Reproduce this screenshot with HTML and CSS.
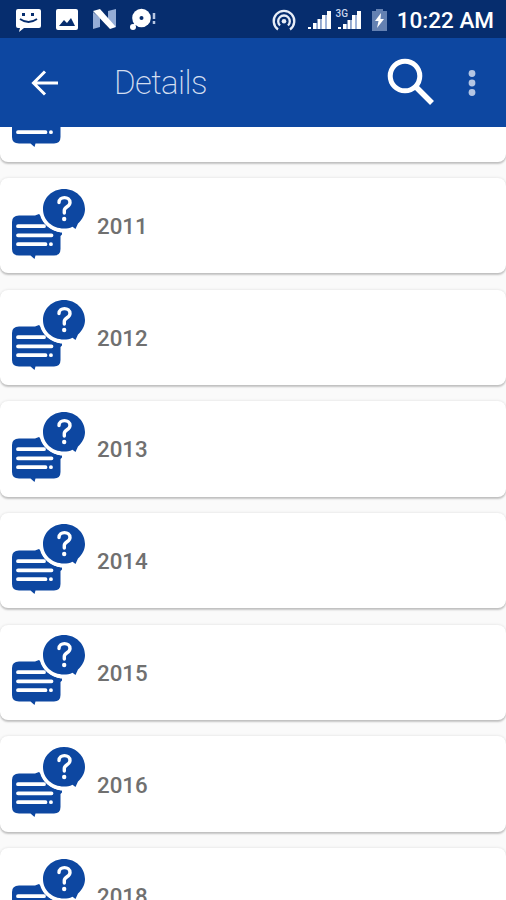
FILE: index.html
```html
<!DOCTYPE html>
<html lang="en">
<head>
  <meta charset="UTF-8" />
  <title>Details</title>
  <meta name="viewport" content="width=device-width, initial-scale=1.0" />
  <link rel="stylesheet" href="styles.css">
</head>
<body>
  <!-- Shared chat icon -->
  <svg class="sprite" aria-hidden="true">
    <symbol id="chat" viewBox="0 0 74 72">
      <path fill="#0d47a1" d="M7 27.500H23L27 26L29 28C31 36 39 43 50 44.500V46.500L48.500 48V61Q48.500 67.500 42 67.500H23.500L22.500 71L18.500 67.500H7Q0 67.500 0 61V34Q0 27.500 7 27.500Z"/>
      <path stroke="#fff" stroke-width="3.800" stroke-linecap="round" d="M6 38.200H32M6 47.300H39.500M6 56.200H33.500M38.900 56.200H39"/>
      <path fill="#fff" d="M28 26.500C30 36 39 43 49.500 44.500V41L31 24Z"/>
      <path fill="#0d47a1" d="M52 1C64 1 73 10 73 21C73 26.500 70.500 31.500 66 35.500L63.500 41L60.500 38.800C57.500 40.300 55 40.500 52 40.500C40 40.500 31 32 31 21C31 10 40 1 52 1Z"/>
      <path fill="none" stroke="#fff" stroke-width="3.400" stroke-linecap="round" d="M47 14.500C47 8 58 8 58 14.500C58 19 52.300 18.500 52.300 22.500V25"/>
      <circle cx="52.200" cy="31" r="2.200" fill="#fff"/>
    </symbol>
  </svg>

  <div class="status-bar">
    <svg class="status-icons" width="145" height="24" viewBox="0 0 145 24">
      <path fill="#fff" d="M2 1H23Q25 1 25 3V18Q25 20 23 20H8L3 24L4 20H2Q0 20 0 18V3Q0 1 2 1Z"/>
      <path fill="none" stroke="#062d6e" stroke-width="1.800" d="M4 11Q12.500 17 21 11"/>
      <path fill="#062d6e" d="M6 5H9V8H6ZM15 5H18V8H15Z"/>
      <rect x="40" y="1" width="22" height="21" rx="2" fill="#fff"/>
      <path fill="#062d6e" d="M43 18L48 12L51 15L55 10L59 18Z"/>
      <path fill="#95add6" d="M77 4L84 10V19L77 21ZM92 3L100 1V19L92 13Z"/>
      <path fill="#fff" d="M77 3L84 1L100 19L94 21Z"/>
      <circle cx="125.500" cy="10" r="9.300" fill="#fff"/>
      <circle cx="117" cy="19" r="3" fill="#fff"/>
      <path stroke="#fff" stroke-width="2" d="M118 17L120 15"/>
      <circle cx="125.500" cy="10" r="2" fill="#062d6e"/>
      <path stroke="#b7c7e3" stroke-width="2.500" d="M138 5V11M138 13V16"/>
    </svg>
    <svg class="status-icons" width="116" height="26" viewBox="0 0 116 26">
      <g fill="none" stroke="#e7edf7" stroke-width="2.300">
        <path d="M6 22.500A10.300 10.300 0 1 1 18 22.500"/>
        <path d="M8 18.500A5.800 5.800 0 1 1 16 18.500"/>
      </g>
      <circle cx="12" cy="14.300" r="2.300" fill="#e7edf7"/>
      <path fill="#fff" d="M36 20H39V22H36ZM41 16H44V22H41ZM45.500 12H48.500V22H45.500ZM50 8H53V22H50ZM55 4H59V22H55Z"/>
      <path fill="#fff" d="M66 20H69V22H66ZM71 17H74V22H71ZM75.500 13H78.500V22H75.500ZM80 8H83V22H80ZM85 4H89V22H85Z"/>
      <path fill="#9fb4d9" d="M44 16H45.500V22H44ZM48.500 12H50V22H48.500ZM53 8H55V22H53ZM74 17H75.500V22H74ZM78.500 13H80V22H78.500ZM83 8H85V22H83Z"/>
      <text x="63.500" y="10" class="network">3G</text>
      <path fill="#6481b2" d="M104 2H111V4H115V24H100V4H104Z"/>
      <path fill="#fff" d="M109 6L103 14H106.500L105 21L112 12H108.500Z"/>
    </svg>
    <span class="clock">10:22 AM</span>
  </div>

  <header>
    <svg class="back" width="28" height="28" viewBox="0 0 28 28">
      <path fill="none" stroke="#fff" stroke-width="3" d="M28 14H4.500M15 2.500L3.500 14L15 25.500"/>
    </svg>
    <h1>Details</h1>
    <svg class="search" width="48" height="48" viewBox="0 0 48 48">
      <circle cx="18" cy="18" r="14.800" fill="none" stroke="#fff" stroke-width="5"/>
      <path stroke="#fff" stroke-width="5.500" d="M28 28L45 45"/>
    </svg>
    <svg class="more" width="8" height="28" viewBox="0 0 8 28">
      <g fill="#b4c6e4">
        <circle cx="4" cy="4.500" r="3.400"/>
        <circle cx="4" cy="14" r="3.400"/>
        <circle cx="4" cy="23.500" r="3.400"/>
      </g>
    </svg>
  </header>

  <main>
    <div class="list">
      <div class="card"><svg class="chat"><use href="#chat"/></svg></div>
      <div class="card"><svg class="chat"><use href="#chat"/></svg><span>2011</span></div>
      <div class="card"><svg class="chat"><use href="#chat"/></svg><span>2012</span></div>
      <div class="card"><svg class="chat"><use href="#chat"/></svg><span>2013</span></div>
      <div class="card"><svg class="chat"><use href="#chat"/></svg><span>2014</span></div>
      <div class="card"><svg class="chat"><use href="#chat"/></svg><span>2015</span></div>
      <div class="card"><svg class="chat"><use href="#chat"/></svg><span>2016</span></div>
      <div class="card"><svg class="chat"><use href="#chat"/></svg><span>2018</span></div>
    </div>
  </main>
</body>
</html>
```
FILE: styles.css
```css
:root {
  --bg: #fafafa;
  --primary: #0d47a1;
  --primary-dark: #062d6e;
  --text: #707070;
}
* {
  box-sizing: border-box;
}
body {
  margin: 0;
  height: 100vh;
  display: flex;
  flex-direction: column;
  overflow: hidden;
  font-family: Roboto, sans-serif;
  background: var(--bg);
}
svg {
  display: block;
  flex: none;
}
.sprite {
  width: 0;
  height: 0;
}
.status-bar {
  flex: none;
  height: 38px;
  padding: 2px 12px 0 16px;
  display: flex;
  align-items: center;
  background: var(--primary-dark);
}
.status-icons:nth-child(2) {
  margin-left: 111px;
}
.network {
  font-size: 10px;
  font-weight: 500;
  fill: #c9d6ec;
}
.clock {
  margin-left: auto;
  color: #fff;
  font-size: 22.5px;
  font-weight: 500;
  line-height: 36px;
  white-space: nowrap;
}
header {
  flex: none;
  height: 89px;
  padding: 0 30px;
  display: flex;
  align-items: center;
  background: var(--primary);
}
h1 {
  margin: 0 auto 0 56px;
  padding-top: 1px;
  color: #d3def0;
  font-size: 33px;
  font-weight: 200;
  letter-spacing: -0.6px;
  line-height: 40px;
}
.search {
  margin: 0 33px 2px 0;
}
main {
  flex: 1;
  min-height: 0;
  overflow: hidden;
}
.list {
  display: flex;
  flex-direction: column;
  gap: 16.5px;
  margin-top: -60.7px;
}
.card {
  flex: none;
  height: 95.2px;
  padding: 0 12px;
  display: flex;
  align-items: center;
  gap: 11px;
  background: #fff;
  border-radius: 8px;
  box-shadow: 0 2px 2px rgba(0, 0, 0, 0.2), 0 0 3px rgba(0, 0, 0, 0.12);
  color: var(--text);
  font-size: 22.3px;
  font-weight: 500;
}
.card span {
  padding-top: 1px;
}
.chat {
  width: 74px;
  height: 72px;
  margin-bottom: 4px;
}
```
